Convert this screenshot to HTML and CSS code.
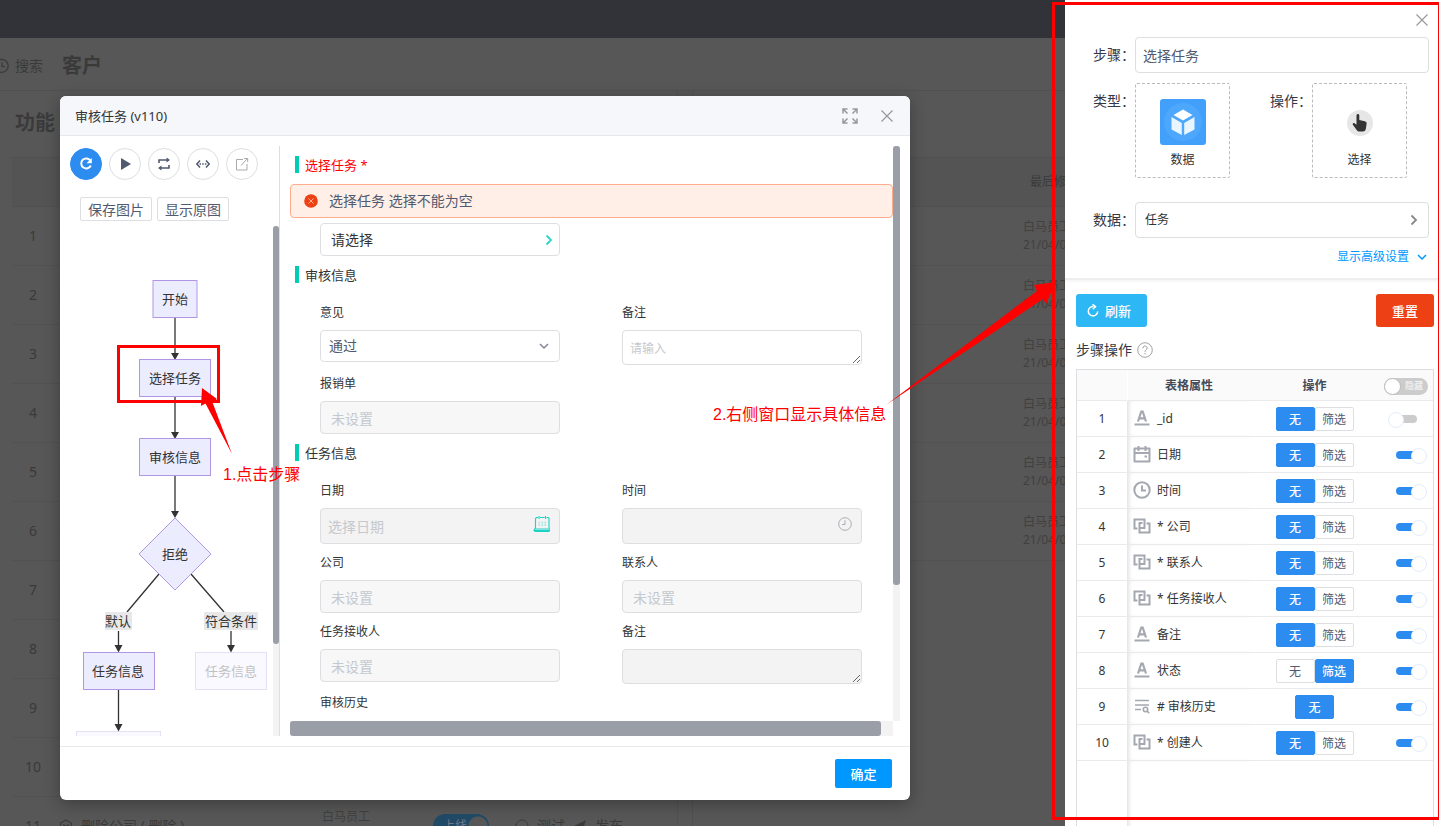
FILE: index.html
```html
<!DOCTYPE html>
<html lang="zh-CN">
<head>
<meta charset="utf-8">
<title>审核任务</title>
<link rel="stylesheet" href="styles.css">
</head>
<body>
<svg class="defs" aria-hidden="true">
  <symbol id="i-close" viewBox="0 0 14 14"><path d="M1.500 1.500l11 11M12.500 1.500l-11 11" fill="none" stroke="currentColor" stroke-width="1.200"/></symbol>
  <symbol id="i-right" viewBox="0 0 10 12"><path d="M2.500 1.500L7 6l-4.500 4.500" fill="none" stroke="currentColor" stroke-width="1.800"/></symbol>
  <symbol id="i-down" viewBox="0 0 12 10"><path d="M2 3l4 4 4-4" fill="none" stroke="currentColor" stroke-width="1.500"/></symbol>
  <symbol id="i-text" viewBox="0 0 18 18"><path d="M1.500 15.500h15" stroke="currentColor" stroke-width="2"/><path d="M5 12.500L8.300 2.500h1.400L13 12.500M6.400 9.300h5.200" fill="none" stroke="currentColor" stroke-width="2.200"/></symbol>
  <symbol id="i-date" viewBox="0 0 18 18"><path d="M1.500 3.500h15v13h-15zM1.500 8h15" fill="none" stroke="currentColor" stroke-width="2" stroke-linejoin="round"/><path d="M5.500 1v5M12.500 1v5" stroke="currentColor" stroke-width="2"/><path d="M11.500 10.500h2.500v2h-2.500z" fill="currentColor"/></symbol>
  <symbol id="i-time" viewBox="0 0 18 18"><circle cx="9" cy="9" r="7.700" fill="none" stroke="currentColor" stroke-width="2"/><path d="M9 4.500V9.500h4" fill="none" stroke="currentColor" stroke-width="2"/></symbol>
  <symbol id="i-link" viewBox="0 0 18 18"><path d="M4.500 11.500h-3v-9h10v8.500h-5v-5h3" fill="none" stroke="currentColor" stroke-width="2"/><path d="M13.500 6.500h3v9h-10v-3.500" fill="none" stroke="currentColor" stroke-width="2"/></symbol>
  <symbol id="i-list" viewBox="0 0 18 18"><path d="M2 3.500h14M2 8h14M2 12.500h6" stroke="currentColor" stroke-width="1.600"/><circle cx="12.500" cy="12.500" r="2.200" fill="none" stroke="currentColor" stroke-width="1.600"/><path d="M14 14l2.200 2.200" stroke="currentColor" stroke-width="1.600"/></symbol>
  <symbol id="i-cube" viewBox="0 0 14 14"><path d="M7 1l5.500 3v6L7 13 1.500 10V4zM4 5.500l3 1.800 3-1.800M7 7.300V10" fill="none" stroke="currentColor" stroke-width="1.200"/></symbol>
</svg>

<div class="page">
  <header class="topbar"></header>
  <nav class="subbar">
    <svg class="history" viewBox="0 0 16 16"><path d="M2.500 4A6.500 6.500 0 1 1 2 11M8 4.500V8.500h3" fill="none" stroke="currentColor" stroke-width="1.200"/></svg>
    <span class="search">搜索</span>
    <h1>客户</h1>
  </nav>
  <div class="cards">
    <section class="card left-card">
      <h2>功能</h2>
      <table class="list">
        <thead><tr><th class="c-no"></th><th></th><th class="c-user"></th><th class="c-act"></th></tr></thead>
        <tbody>
          <tr><td class="c-no">1</td><td><svg><use href="#i-cube"/></svg></td><td></td><td></td></tr>
          <tr><td class="c-no">2</td><td><svg><use href="#i-cube"/></svg></td><td></td><td></td></tr>
          <tr><td class="c-no">3</td><td><svg><use href="#i-cube"/></svg></td><td></td><td></td></tr>
          <tr><td class="c-no">4</td><td><svg><use href="#i-cube"/></svg></td><td></td><td></td></tr>
          <tr><td class="c-no">5</td><td><svg><use href="#i-cube"/></svg></td><td></td><td></td></tr>
          <tr><td class="c-no">6</td><td><svg><use href="#i-cube"/></svg></td><td></td><td></td></tr>
          <tr><td class="c-no">7</td><td><svg><use href="#i-cube"/></svg></td><td></td><td></td></tr>
          <tr><td class="c-no">8</td><td><svg><use href="#i-cube"/></svg></td><td></td><td></td></tr>
          <tr><td class="c-no">9</td><td><svg><use href="#i-cube"/></svg></td><td></td><td></td></tr>
          <tr><td class="c-no">10</td><td><svg><use href="#i-cube"/></svg></td><td></td><td></td></tr>
          <tr><td class="c-no">11</td><td><svg><use href="#i-cube"/></svg>删除公司 ( 删除 )</td><td class="who">白马员工<br>21/04/01</td>
            <td><div class="acts"><span class="online">上线</span><svg viewBox="0 0 14 14"><circle cx="7" cy="7" r="6" fill="none" stroke="currentColor"/></svg><span>测试</span><svg class="plane" viewBox="0 0 14 14"><path d="M1 7l12-6-4 12-3-4z" fill="currentColor"/></svg><span>发布</span></div></td></tr>
        </tbody>
      </table>
    </section>
    <section class="card right-card">
      <h2></h2>
      <table class="list">
        <thead><tr><th></th><th class="c-last">最后修改</th></tr></thead>
        <tbody>
          <tr><td></td><td class="who">白马员工<br>21/04/01</td></tr>
          <tr><td></td><td class="who">白马员工<br>21/04/01</td></tr>
          <tr><td></td><td class="who">白马员工<br>21/04/01</td></tr>
          <tr><td></td><td class="who">白马员工<br>21/04/01</td></tr>
          <tr><td></td><td class="who">白马员工<br>21/04/01</td></tr>
          <tr><td></td><td class="who">白马员工<br>21/04/01</td></tr>
        </tbody>
      </table>
    </section>
  </div>
</div>

<div class="modal" role="dialog" aria-labelledby="modal-title">
  <header class="modal-head">
    <span id="modal-title">审核任务 (v110)</span>
    <button class="icon-btn" aria-label="全屏"><svg class="full" viewBox="0 0 16 16"><path d="M1 5.500V1h4.500M1 1l4.500 4.500M10.500 1h4.500v4.500M15 1l-4.500 4.500M1 10.500v4.500h4.500M1 15l4.500-4.500M15 10.500v4.500h-4.500M15 15l-4.500-4.500" fill="none" stroke="currentColor" stroke-width="1.500"/></svg></button>
    <button class="icon-btn" aria-label="关闭"><svg class="x"><use href="#i-close"/></svg></button>
  </header>
  <div class="modal-body">
    <aside class="flow-pane">
      <div class="rounds">
        <button class="round primary" aria-label="刷新"><svg viewBox="0 0 16 16"><path d="M12.400 4.600A5 5 0 1 0 12.800 9.500" fill="none" stroke="currentColor" stroke-width="2"/><path d="M13.800 2v5.200H8.500z" fill="currentColor"/></svg></button>
        <button class="round" aria-label="运行"><svg viewBox="0 0 16 16"><path d="M4 2L14 8l-10 6z" fill="currentColor"/></svg></button>
        <button class="round" aria-label="循环"><svg viewBox="0 0 16 16"><path d="M3 7V4h8M13 9v3H5" fill="none" stroke="currentColor" stroke-width="1.600"/><path d="M10.500 1.500L14 4l-3.500 2.500zM5.500 9.500L2 12l3.500 2.500z" fill="currentColor"/></svg></button>
        <button class="round" aria-label="宽度"><svg viewBox="0 0 16 16"><path d="M5 4.500L1.800 8 5 11.500M11 4.500L14.200 8 11 11.500" fill="none" stroke="currentColor" stroke-width="1.500"/><path d="M4.500 8h7" stroke="currentColor" stroke-width="1.500" stroke-dasharray="1.500 1.200"/></svg></button>
        <button class="round pale" aria-label="打开"><svg viewBox="0 0 16 16"><path d="M9 3.500H2.500v10.500h10.500V8M7 9.500L13.500 2.500M10 2.500h3.700v3.700" fill="none" stroke="currentColor" stroke-width="1"/></svg></button>
      </div>
      <div class="minis"><button>保存图片</button><button>显示原图</button></div>
      <div class="flow-scroll">
        <svg class="flow" viewBox="70 226 203 510">
          <g class="edge">
            <path d="M175 318V354M175 397V433M175 476V512M159 574L127 612M191 574L224 612M118.500 631V647M231 631V647M118.500 690V726"/>
          </g>
          <g class="tips">
            <path d="M171 353h8l-4 7zM171 432h8l-4 7zM171 511h8l-4 7zM114.500 645h8l-4 7.500zM227 645h8l-4 7.500zM114.500 724h8l-4 7.500z"/>
          </g>
          <g class="node">
            <rect x="153" y="280.500" width="44" height="37"/>
            <rect x="139.500" y="359.500" width="71" height="37"/>
            <rect x="139.500" y="438.500" width="71" height="37"/>
            <path d="M175 518l36 36-36 36-36-36z"/>
            <rect x="83.500" y="652.500" width="71" height="37"/>
          </g>
          <g class="labels">
            <rect x="105" y="612" width="27" height="18"/><rect x="204" y="612" width="54" height="18"/>
          </g>
          <g class="txt">
            <text x="175" y="304">开始</text><text x="175" y="383">选择任务</text><text x="175" y="462">审核信息</text><text x="175" y="559">拒绝</text>
            <text x="118" y="626">默认</text><text x="231" y="626">符合条件</text><text x="118" y="676">任务信息</text>
          </g>
          <g class="faded">
            <g class="node"><rect x="195.500" y="652.500" width="71" height="37"/><rect x="76.500" y="731.500" width="84" height="37"/></g>
            <g class="txt"><text x="231" y="676">任务信息</text></g>
          </g>
        </svg>
        <div class="vbar"><div class="thumb"></div></div>
      </div>
    </aside>
    <main class="form-pane">
      <div class="form">
        <h3 class="sec err">选择任务 *</h3>
        <div class="alert" role="alert"><svg viewBox="0 0 14 14"><circle cx="7" cy="7" r="6.800" fill="#ed4014"/><path d="M4.400 4.400l5.200 5.200M9.600 4.400L4.400 9.600" stroke="#ffb08f" stroke-width="1"/></svg>选择任务 选择不能为空</div>
        <button class="picker">请选择<svg><use href="#i-right"/></svg></button>
        <h3 class="sec">审核信息</h3>
        <div class="fields">
          <div class="field"><label for="op">意见</label><div class="wrap"><select id="op"><option>通过</option></select><svg class="caret"><use href="#i-down"/></svg></div></div>
          <div class="field"><label for="n1">备注</label><textarea id="n1" placeholder="请输入"></textarea></div>
          <div class="field"><label for="bx">报销单</label><input id="bx" placeholder="未设置" disabled></div>
        </div>
        <h3 class="sec">任务信息</h3>
        <div class="fields">
          <div class="field"><label for="d1">日期</label><div class="wrap"><input id="d1" class="tall" placeholder="选择日期" disabled><svg class="cal" viewBox="0 0 18 18"><path d="M5 2.500H3.500L2.500 3.500v9L1 15.500h15.500l-.5-3v-9l-1-1h-1.500M7 2.500h4.500M1.500 14h14M1.500 16.500h15M6 1v3M12.500 1v3" fill="none" stroke="#19d3c5" stroke-width="1.100"/><path d="M5.500 7.500h8M5.500 10h8" stroke="#8ee8e0" stroke-width="1.300" stroke-dasharray="1.500 1.500"/></svg></div></div>
          <div class="field"><label for="t1">时间</label><div class="wrap"><input id="t1" class="tall" disabled><svg class="clock" viewBox="0 0 14 14"><circle cx="7" cy="7" r="6.300" fill="none" stroke="currentColor"/><path d="M7 3.200V7.500H4" fill="none" stroke="currentColor"/></svg></div></div>
          <div class="field"><label for="co">公司</label><input id="co" placeholder="未设置" disabled></div>
          <div class="field"><label for="ct">联系人</label><input id="ct" placeholder="未设置" disabled></div>
          <div class="field"><label for="rc">任务接收人</label><input id="rc" placeholder="未设置" disabled></div>
          <div class="field"><label for="n2">备注</label><textarea id="n2" disabled></textarea></div>
          <div class="field"><label>审核历史</label></div>
        </div>
      </div>
      <div class="vbar"><div class="thumb"></div></div>
      <div class="hbar"><div class="thumb"></div></div>
    </main>
  </div>
  <footer class="modal-foot"><button class="ok">确定</button></footer>
</div>

<aside class="drawer">
  <div class="drawer-top">
    <div class="closer"><button class="icon-btn" aria-label="关闭"><svg class="x"><use href="#i-close"/></svg></button></div>
    <div class="row"><label class="lab" for="step">步骤：</label><input id="step" class="box" value="选择任务"></div>
    <div class="row types">
      <span class="lab">类型：</span>
      <button class="tile"><svg class="big" viewBox="0 0 46 46"><rect width="46" height="46" rx="3" fill="#42a0fb"/><circle cx="23" cy="23" r="19" fill="#4ca7fd"/><path d="M23 10.500l9.500 5.500-9.500 5.500-9.500-5.500z" fill="#fff"/><path d="M11.500 18l10.300 6v12l-10.300-5.500zM34.500 18l-10.300 6v12l10.300-5.500z" fill="#eaf6ff"/></svg><span>数据</span></button>
      <span class="lab second">操作：</span>
      <button class="tile"><svg class="hand" viewBox="0 0 26 26"><circle cx="13" cy="13" r="13" fill="#e6e6e6"/><path d="M9.500 5.500c0-2 2.800-2 2.800 0v4.500l5.500 1.200c1.500.4 2 1.300 1.800 2.800l-.8 5c-.3 1.600-1.200 2.500-2.800 2.500h-3.500c-1.200 0-2-.5-2.800-1.500L6 15c-1-1.300.6-2.600 1.800-1.600l1.700 1.400z" fill="#333"/></svg><span>选择</span></button>
    </div>
    <div class="row data"><span class="lab">数据：</span><button class="box pick">任务<svg><use href="#i-right"/></svg></button></div>
    <a class="adv" href="#">显示高级设置<svg><use href="#i-down"/></svg></a>
  </div>
  <div class="drawer-main">
    <div class="bar">
      <button class="refresh"><svg viewBox="0 0 14 14"><path d="M7.500 2.500A4.700 4.700 0 1 0 11.700 7.500" fill="none" stroke="currentColor" stroke-width="1.500"/><path d="M6.500 .3L9.500 2.600 6.800 5.200" fill="none" stroke="currentColor" stroke-width="1.500"/></svg>刷新</button>
      <button class="reset">重置</button>
    </div>
    <div class="cap">步骤操作<svg viewBox="0 0 16 16"><circle cx="8" cy="8" r="7.300" fill="none" stroke="currentColor" stroke-width=".9"/><path d="M5.800 6.300c0-3 4.400-3 4.400-.2 0 1.700-2.200 1.600-2.200 3.700M8 11v1.300" fill="none" stroke="currentColor"/></svg></div>
    <table class="ops">
      <thead><tr><th class="o-no"></th><th class="o-name">表格属性</th><th class="o-op">操作</th><th class="o-sw"><label class="hide"><input type="checkbox" aria-label="隐藏"><span>隐藏</span></label></th></tr></thead>
      <tbody>
        <tr><td>1</td><td class="nm"><svg><use href="#i-text"/></svg>_id</td><td><div class="seg"><button class="on">无</button><button>筛选</button></div></td><td><input class="sw" type="checkbox" aria-label="_id"></td></tr>
        <tr><td>2</td><td class="nm"><svg><use href="#i-date"/></svg>日期</td><td><div class="seg"><button class="on">无</button><button>筛选</button></div></td><td><input class="sw" type="checkbox" aria-label="日期" checked></td></tr>
        <tr><td>3</td><td class="nm"><svg><use href="#i-time"/></svg>时间</td><td><div class="seg"><button class="on">无</button><button>筛选</button></div></td><td><input class="sw" type="checkbox" aria-label="时间" checked></td></tr>
        <tr><td>4</td><td class="nm"><svg><use href="#i-link"/></svg>* 公司</td><td><div class="seg"><button class="on">无</button><button>筛选</button></div></td><td><input class="sw" type="checkbox" aria-label="公司" checked></td></tr>
        <tr><td>5</td><td class="nm"><svg><use href="#i-link"/></svg>* 联系人</td><td><div class="seg"><button class="on">无</button><button>筛选</button></div></td><td><input class="sw" type="checkbox" aria-label="联系人" checked></td></tr>
        <tr><td>6</td><td class="nm"><svg><use href="#i-link"/></svg>* 任务接收人</td><td><div class="seg"><button class="on">无</button><button>筛选</button></div></td><td><input class="sw" type="checkbox" aria-label="任务接收人" checked></td></tr>
        <tr><td>7</td><td class="nm"><svg><use href="#i-text"/></svg>备注</td><td><div class="seg"><button class="on">无</button><button>筛选</button></div></td><td><input class="sw" type="checkbox" aria-label="备注" checked></td></tr>
        <tr><td>8</td><td class="nm"><svg><use href="#i-text"/></svg>状态</td><td><div class="seg"><button>无</button><button class="on">筛选</button></div></td><td><input class="sw" type="checkbox" aria-label="状态" checked></td></tr>
        <tr><td>9</td><td class="nm"><svg><use href="#i-list"/></svg># 审核历史</td><td><div class="seg"><button class="on">无</button></div></td><td><input class="sw" type="checkbox" aria-label="审核历史" checked></td></tr>
        <tr><td>10</td><td class="nm"><svg><use href="#i-link"/></svg>* 创建人</td><td><div class="seg"><button class="on">无</button><button>筛选</button></div></td><td><input class="sw" type="checkbox" aria-label="创建人" checked></td></tr>
        <tr class="rest"><td></td><td class="nm"></td><td></td><td></td></tr>
      </tbody>
    </table>
  </div>
</aside>

<svg class="notes">
  <rect x="118.500" y="346.500" width="100" height="55"/>
  <rect x="1053.500" y="3.500" width="386" height="815"/>
  <path d="M202 388l-1 18 4.500-2.500L232 454 212.500 402.500l4.500-3.500z"/>
  <path d="M1056 282l-22 3 3 6L886 405l157-106 3 5z"/>
  <text x="223" y="480">1.点击步骤</text>
  <text x="713" y="420">2.右侧窗口显示具体信息</text>
</svg>
</body>
</html>
```
FILE: styles.css
```css
* { box-sizing: border-box; }
html, body { height: 100%; }
body {
  margin: 0;
  position: relative;
  overflow: hidden;
  background: #575757;
  color: #333;
  font: 14px/20px "Noto Sans", "Noto Sans CJK SC", sans-serif;
}
button, input, select, textarea { font: inherit; color: inherit; margin: 0; padding: 0; }
button { background: none; border: 0; cursor: pointer; }
h1, h2, h3 { margin: 0; font-weight: 400; }
svg { display: block; flex: none; }
.defs { position: absolute; width: 0; height: 0; }

/* dimmed page */
.page { height: 100%; overflow: hidden; color: #3a3a3a; }
.topbar { height: 38px; background: #323339; }
.subbar { height: 53px; display: flex; align-items: center; padding-top: 3px; border-bottom: 1px solid #505050; }
.history { width: 16px; height: 16px; margin-left: -6px; }
.search { margin: 0 19px 0 5px; }
.subbar h1, .card h2 { font-size: 20px; font-weight: 700; line-height: 28px; }
.cards { display: grid; grid-template-columns: 678px 1fr; column-gap: 14px; height: 100%; }
.card { border: solid #505050; border-width: 0 1px; }
.left-card { padding-left: 12px; border-left: 0; }
.card h2 { height: 66px; padding: 18px 3px; }
.list { width: 100%; border-collapse: collapse; table-layout: fixed; }
.list th { height: 49px; padding: 0; background: #545454; border-bottom: 1px solid #515151; border-top: 1px solid #515151; font-weight: 400; text-align: left; }
.list td { height: 59px; padding: 0; border-bottom: 1px solid #525252; }
.list td svg { display: inline-block; width: 14px; height: 14px; margin: 0 8px 0 -1px; vertical-align: -2px; }
.list .c-no { width: 48px; padding-right: 6px; text-align: center; }
.c-user { width: 111px; }
.c-act { width: 244px; }
.list .c-user, .list .who { font-size: 12px; line-height: 18px; color: #404040; }
.list .c-last { width: 415px; padding-left: 7px; font-size: 12px; }
.acts { display: flex; align-items: center; }
.acts .online { width: 56px; height: 24px; margin-right: 27px; padding-left: 10px; border-radius: 12px; font-size: 12px; line-height: 24px; color: #778; background: radial-gradient(circle at 45px 12px, #575757 9px, #204a66 10px); }
.acts svg.plane { margin-left: 8px; }

/* modal */
.modal {
  position: absolute; left: 60px; top: 96px; width: 850px;
  display: flex; flex-direction: column;
  background: #fff; border-radius: 6px; overflow: hidden;
  box-shadow: 0 4px 16px rgba(0, 0, 0, .3);
}
.modal-head { display: flex; align-items: center; height: 40px; padding: 0 16px 0 15px; background: #f5f7fb; border-bottom: 1px solid #e6e8ec; font-size: 13px; }
.modal-head > span { flex: 1; }
.modal-head .icon-btn + .icon-btn { margin-left: 22px; }
.icon-btn { color: #999; }
.full { width: 16px; height: 16px; color: #999; }
.x { width: 14px; height: 14px; }
.modal-body { display: flex; gap: 10px; height: 610px; padding: 10px; }
.flow-pane { flex: none; width: 210px; display: flex; flex-direction: column; border-right: 1px solid #dcdee2; }
.rounds { display: flex; gap: 7px; padding-top: 2px; }
.round { width: 32px; height: 32px; display: grid; place-items: center; border: 1px solid #dcdee2; border-radius: 50%; color: #515a6e; }
.round svg { width: 16px; height: 16px; }
.round.primary { background: #2d8cf0; border-color: #2d8cf0; color: #fff; }
.round.pale { color: #aaa; }
.minis { display: flex; gap: 5px; padding: 17px 10px 5px; }
.minis button { width: 72px; height: 24px; border: 1px solid #dcdee2; border-radius: 2px; color: #515a6e; line-height: 24px; }
.flow-scroll { flex: 1; display: flex; min-height: 0; }
.flow { width: 203px; height: 510px; }
.vbar { width: 6px; background: #f3f3f3; }
.thumb { background: #9a9ea7; border-radius: 3px; }
.flow-scroll .thumb { height: 418px; }
.node { fill: #ececff; stroke: #b296e4; stroke-width: 1; }
.edge { fill: none; stroke: #333; stroke-width: 1.3; }
.tips { fill: #333; }
.labels { fill: #e8e8e8; }
.txt { font-size: 13px; text-anchor: middle; fill: #333; }
.faded { opacity: .3; }

.form-pane { flex: 1; display: grid; grid-template-columns: 1fr 7px; grid-template-rows: 1fr 15px; min-width: 0; }
.form { overflow: hidden; min-height: 0; }
.form-pane .vbar { width: 7px; }
.form-pane .vbar .thumb { height: 439px; }
.hbar { background: #f3f3f3; }
.hbar .thumb { width: 98%; height: 15px; }
.sec { height: 17px; margin: 10px 0 11px 5px; border-left: 4px solid #00ccb4; padding-left: 6px; font-size: 13px; line-height: 18px; }
.sec.err { color: red; }
.alert { display: flex; align-items: center; height: 34px; padding: 0 13px; border: 1px solid #ffab8d; border-radius: 4px; background: #ffefe6; color: #515a6e; }
.alert svg { width: 14px; height: 14px; margin-right: 11px; }
.picker { display: flex; align-items: center; justify-content: space-between; width: 240px; height: 33px; margin: 5px 0 0 30px; padding: 0 5px 0 10px; border: 1px solid #dcdee2; border-radius: 4px; line-height: 34px; }
.picker svg { width: 10px; height: 12px; color: #2bd6c6; }
.fields { display: grid; grid-template-columns: 302px 240px; margin-left: 30px; }
.field label { display: block; height: 36px; font-size: 12px; line-height: 38px; }
.field { width: 240px; }
.wrap { position: relative; }
.field input, .field select, .field textarea { display: block; width: 240px; height: 33px; border: 1px solid #dcdee2; border-radius: 4px; background: #fff; padding: 2px 10px 0; color: #515a6e; }
.field select { height: 32px; padding: 0 8px; appearance: none; }
.field textarea { height: 35px; padding: 8px 7px 6px; font-size: 12px; line-height: 20px; overflow: hidden; resize: vertical; }
.field input:disabled { background: #f7f7f7; }
.field textarea:disabled, .field input.tall { background: #f3f3f3; }
.field input.tall { height: 36px; padding: 0 7px; }
::placeholder { color: #c5c8ce; opacity: 1; }
.caret { position: absolute; right: 10px; top: 11px; width: 12px; height: 10px; color: #808695; }
.cal { position: absolute; right: 9px; top: 7px; width: 18px; height: 18px; }
.clock { position: absolute; right: 10px; top: 9px; width: 14px; height: 14px; color: #a9adb5; }
.modal-foot { display: flex; justify-content: flex-end; height: 54px; padding: 12px 18px; border-top: 1px solid #e8eaec; }
.ok { width: 57px; height: 29px; border-radius: 2px; background: #0097ff; color: #fff; font-size: 13px; font-weight: 500; line-height: 30px; }

/* drawer */
.drawer { position: absolute; right: 0; top: 0; bottom: 0; width: 374px; display: flex; flex-direction: column; overflow: hidden; background: #fff; }
.drawer-top { flex: none; height: 280px; padding: 13px 10px 0 28px; border-bottom: 2px solid #eee; box-shadow: 0 1px 3px rgba(0, 0, 0, .06); }
.closer { display: flex; justify-content: flex-end; height: 24px; }
.closer .icon-btn { width: 14px; height: 14px; }
.row { display: flex; }
.lab { flex: none; width: 42px; line-height: 36px; white-space: nowrap; color: #333846; }
.box { flex: 1; min-width: 0; height: 36px; padding: 0 7px; border: 1px solid #dcdee2; border-radius: 4px; color: #515a6e; }
.types { margin: 10px 0 24px; }
.tile { width: 95px; height: 95px; display: flex; flex-direction: column; align-items: center; justify-content: flex-end; padding-bottom: 7px; border: 1px dashed #bbb; border-radius: 2px; font-size: 12px; }
.big { width: 46px; height: 46px; margin-bottom: 5px; }
.hand { width: 26px; height: 26px; margin-bottom: 14px; }
.lab.second { margin-left: 40px; }
.pick { display: flex; align-items: center; justify-content: space-between; padding: 0 9px; font-size: 12px; line-height: 36px; color: #333; }
.pick svg { width: 10px; height: 12px; color: #888; }
.adv { display: flex; align-items: center; justify-content: flex-end; gap: 7px; margin: 9px 1px 0 0; font-size: 12px; color: #0097ff; text-decoration: none; }
.adv svg { width: 12px; height: 10px; }
.drawer-main { flex: 1; padding: 14px 5px 0 11px; }
.bar { display: flex; justify-content: space-between; }
.bar button { height: 33px; border-radius: 3px; color: #fff; font-size: 13px; font-weight: 500; }
.refresh { display: flex; align-items: center; gap: 5px; width: 71px; padding-left: 10px; background: #2db7f5; }
.refresh svg { width: 14px; height: 14px; }
.reset { width: 58px; background: #ed4014; }
.cap { display: flex; align-items: center; gap: 5px; height: 42px; padding-top: 4px; color: #333846; }
.cap svg { width: 16px; height: 16px; color: #999; }
.ops { width: 100%; border-collapse: separate; border-spacing: 0; table-layout: fixed; border: 1px solid #dcdee2; font-size: 12px; text-align: center; }
.ops th { height: 31px; padding: 2px 0 0; background: #fafafa; border-bottom: 1px solid #e8eaec; font-weight: 700; color: #444b5a; }
.ops td { height: 36px; padding: 0; border-bottom: 1px solid #e8eaec; }
.ops .o-no { width: 50px; }
.ops .o-name { border-left: 1px solid #fff; }
.ops .o-op { width: 129px; }
.ops .o-sw { width: 54px; }
.ops td.nm { padding-left: 6px; text-align: left; box-shadow: inset 4px 0 4px -2px rgba(0, 0, 0, .12); }
.nm svg { display: inline-block; width: 18px; height: 18px; margin-right: 6px; vertical-align: -4px; color: #a4a8b0; }
.ops .rest td { height: 80px; border-bottom: 0; }
.seg { display: flex; justify-content: center; }
.seg button { width: 39px; height: 24px; border: 1px solid #dcdee2; border-radius: 2px; color: #515a6e; font-size: 12px; line-height: 24px; }
.seg .on { background: #2d8cf0; border-color: #2d8cf0; color: #fff; font-weight: 500; }
.sw { appearance: none; position: relative; display: block; width: 36px; height: 16px; margin: 0 auto; }
.sw::before { content: ""; position: absolute; left: 7px; top: 4px; width: 22px; height: 8px; border-radius: 4px; background: #ccc; }
.sw::after { content: ""; position: absolute; left: 0; top: 1px; width: 14px; height: 14px; border: 1px solid #e3eefa; border-radius: 50%; background: #fff; }
.sw:checked::before { left: 8px; background: #2d8cf0; }
.sw:checked::after { left: 23px; }
.hide { display: flex; align-items: center; width: 44px; height: 17px; margin: 0 auto; border-radius: 9px; background: #ccc; }
.hide input { appearance: none; width: 17px; height: 17px; border: 1px solid #bbb; border-radius: 50%; background: #fff; }
.hide span { margin-left: 4px; font-size: 9px; line-height: 16px; color: #eee; }

/* annotations */
.notes { position: absolute; inset: 0; width: 100%; height: 100%; pointer-events: none; }
.notes rect { fill: none; stroke: red; stroke-width: 3; }
.notes path { fill: red; }
.notes text { fill: red; font: 16px "Liberation Sans", "Noto Sans CJK SC", sans-serif; }
```
